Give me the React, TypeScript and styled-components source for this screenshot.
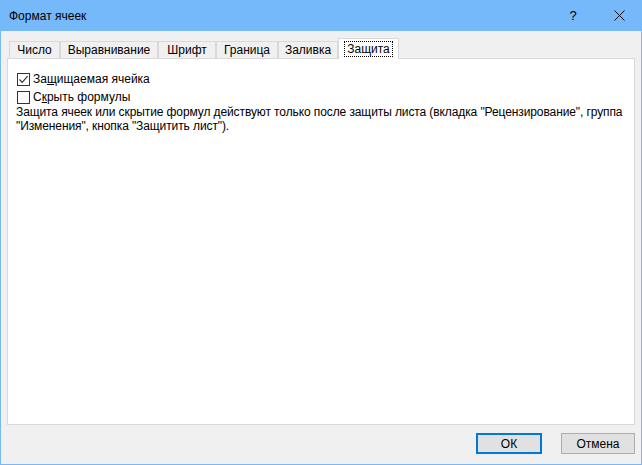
import React from 'react';
import styled, { createGlobalStyle } from 'styled-components';

const GlobalStyle = createGlobalStyle`
  html, body {
    margin: 0;
    padding: 0;
    background: #f0f0f0;
  }
  body {
    font-family: "Liberation Sans", Arial, sans-serif;
    font-size: 12px;
    color: #000;
  }
`;

const Window = styled.div`
  width: 642px;
  height: 465px;
  box-sizing: border-box;
  display: flex;
  flex-direction: column;
  background: #f0f0f0;
  border: 1px solid #79b7f5;
  border-top: none;
`;

const TitleBar = styled.div`
  height: 31px;
  margin: 0 -1px;
  background: #76b9fa;
  display: flex;
  align-items: center;
  padding-left: 9px;
  flex-shrink: 0;
`;

const Title = styled.span`
  flex: 1;
  font-size: 12px;
  padding-top: 1px;
`;

const TitleButton = styled.div<{ $w: number }>`
  width: ${p => p.$w}px;
  flex-shrink: 0;
  height: 31px;
  display: flex;
  align-items: center;
  justify-content: center;
  font-size: 13px;
`;

const Body = styled.div`
  flex: 1;
  display: flex;
  flex-direction: column;
  padding: 7px 6px 10px 6px;
`;

const TabStrip = styled.div`
  display: flex;
  align-items: flex-end;
  height: 21px;
  padding-left: 2px;
  position: relative;
  z-index: 1;
  margin-bottom: -1px;
`;

const Tab = styled.div<{ $active?: boolean; $w: number }>`
  box-sizing: border-box;
  width: ${p => p.$w}px;
  height: ${p => (p.$active ? 21 : 18)}px;
  display: flex;
  align-items: center;
  justify-content: center;
  background: ${p => (p.$active ? '#fff' : '#f0f0f0')};
  border: 1px solid #d9d9d9;
  border-bottom: ${p => (p.$active ? 'none' : '1px solid #d9d9d9')};
  & + & {
    border-left: ${p => (p.$active ? '1px solid #d9d9d9' : 'none')};
  }
`;

const TabLabel = styled.span<{ $focus?: boolean }>`
  padding: 1px 2px 0;
  line-height: 13px;
  outline: ${p => (p.$focus ? '1px dotted #000' : 'none')};
`;

const Panel = styled.div`
  flex: 1;
  background: #fff;
  border: 1px solid #d9d9d9;
  padding: 11px 8px 10px;
`;

const CheckRow = styled.label`
  display: flex;
  align-items: center;
  height: 18px;
  gap: 3px;
`;

const Box = styled.span`
  box-sizing: border-box;
  width: 13px;
  height: 13px;
  border: 1px solid #333;
  background: #fff;
  display: flex;
  align-items: center;
  justify-content: center;
  margin-left: 1px;
`;

const Key = styled.span`
  text-decoration: underline;
`;

const Note = styled.div`
  line-height: 14px;
  white-space: nowrap;
  letter-spacing: -0.1px;
  margin-top: -1px;
`;

const Footer = styled.div`
  display: flex;
  justify-content: flex-end;
  gap: 19px;
  padding-top: 8px;
`;

const Button = styled.button<{ $default?: boolean; $w: number }>`
  box-sizing: border-box;
  width: ${p => p.$w}px;
  height: 21px;
  background: #e1e1e1;
  border: ${p => (p.$default ? '2px solid #0078d7' : '1px solid #adadad')};
  font-family: "Liberation Sans", Arial, sans-serif;
  font-size: 12px;
  color: #000;
  padding: 0;
`;

const tabs = [
  { label: 'Число', w: 51 },
  { label: 'Выравнивание', w: 98 },
  { label: 'Шрифт', w: 58 },
  { label: 'Граница', w: 62 },
  { label: 'Заливка', w: 60 },
  { label: 'Защита', w: 61, active: true },
];

const Check = () => (
  <svg width="11" height="11" viewBox="0 0 11 11">
    <path d="M1.5 5.5 L4.2 8.3 L9.6 2.2" fill="none" stroke="#333" strokeWidth="1.2" />
  </svg>
);

export default function App() {
  return (
    <>
      <GlobalStyle />
      <Window>
        <TitleBar>
          <Title>Формат ячеек</Title>
          <TitleButton $w={46}>?</TitleButton>
          <TitleButton $w={46}>
            <svg width="11" height="11" viewBox="0 0 11 11">
              <path d="M0.5 0.5 L10.5 10.5 M10.5 0.5 L0.5 10.5" stroke="#000" strokeWidth="1" />
            </svg>
          </TitleButton>
        </TitleBar>
        <Body>
          <TabStrip>
            {tabs.map(t => (
              <Tab key={t.label} $active={t.active} $w={t.w}>
                <TabLabel $focus={t.active}>{t.label}</TabLabel>
              </Tab>
            ))}
          </TabStrip>
          <Panel>
            <CheckRow>
              <Box>
                <Check />
              </Box>
              <span>
                За<Key>щ</Key>ищаемая ячейка
              </span>
            </CheckRow>
            <CheckRow>
              <Box />
              <span>
                С<Key>к</Key>рыть формулы
              </span>
            </CheckRow>
            <Note>
              Защита ячеек или скрытие формул действуют только после защиты листа (вкладка "Рецензирование", группа
              <br />
              "Изменения", кнопка "Защитить лист").
            </Note>
          </Panel>
          <Footer>
            <Button $default $w={66}>ОК</Button>
            <Button $w={74}>Отмена</Button>
          </Footer>
        </Body>
      </Window>
    </>
  );
}
